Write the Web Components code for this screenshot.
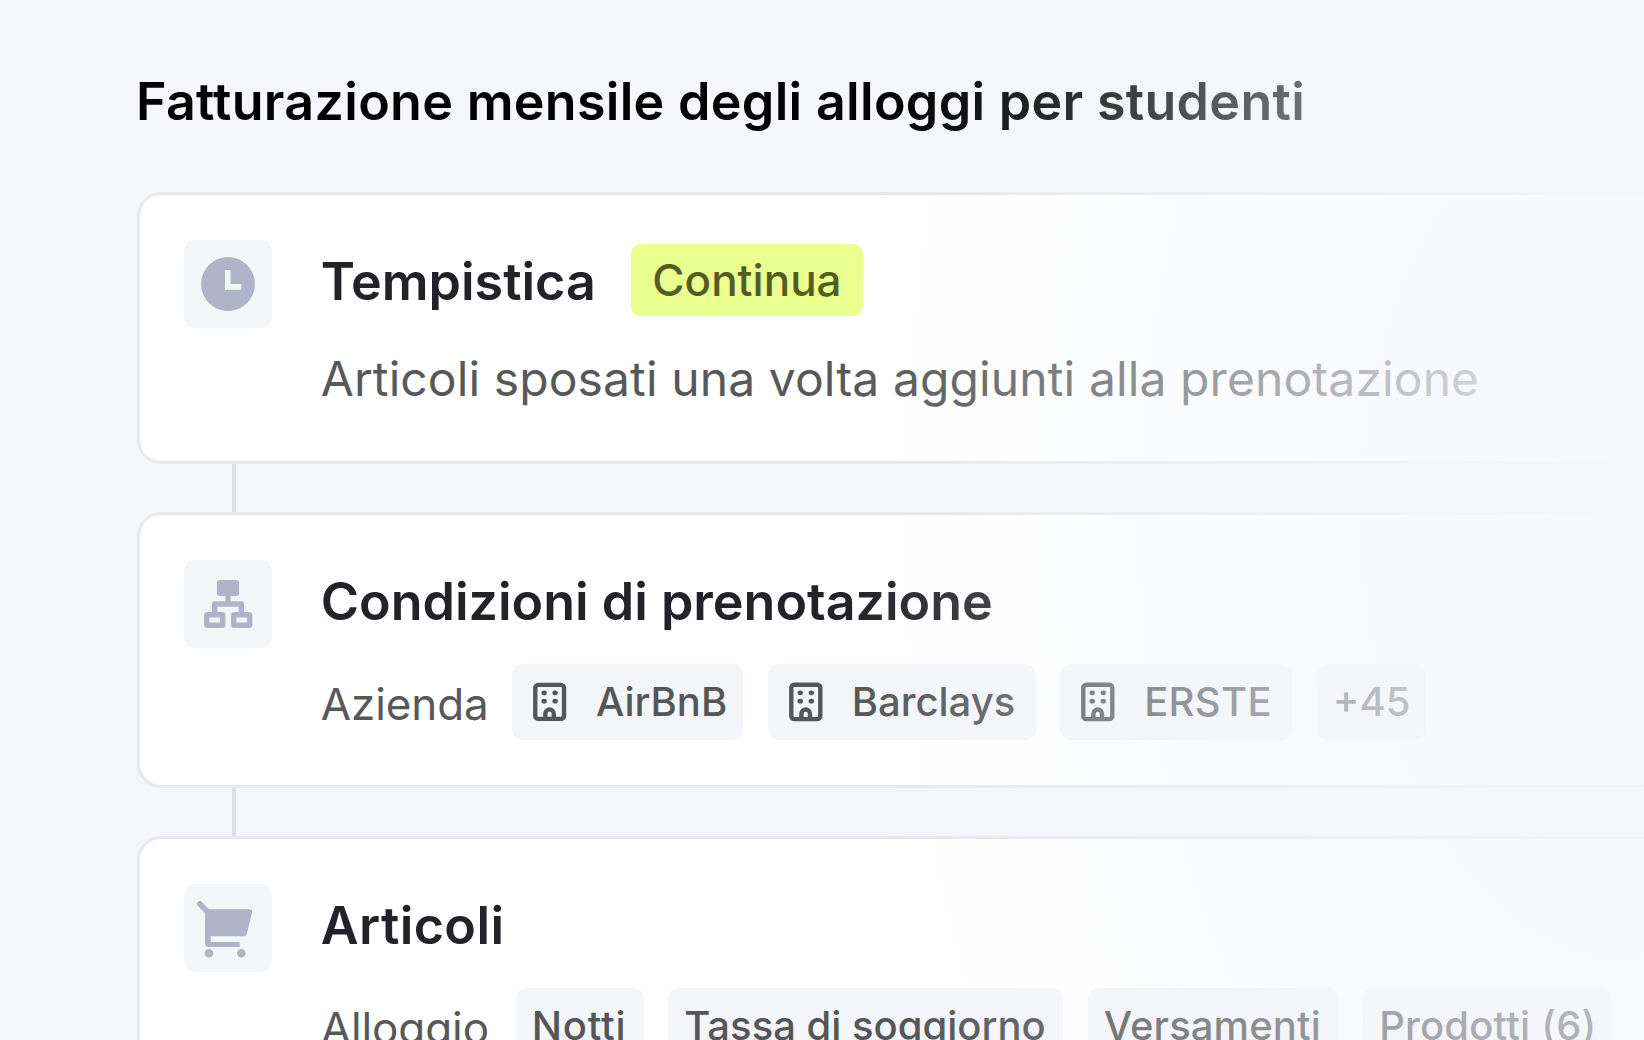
<!DOCTYPE html>
<html lang="it">
<head>
<meta charset="UTF-8">
<title>Fatturazione mensile</title>
<style>
	html, body {
		margin: 0;
		height: 100%;
		overflow: hidden;
		background: #f4f6fa;
	}
</style>
</head>
<body>
<billing-flow heading="Fatturazione mensile degli alloggi per studenti">
	<flow-card heading="Tempistica">
		<flow-icon slot="icon" name="clock"></flow-icon>
		<flow-chip slot="badge" class="lime">Continua</flow-chip>
		<flow-text>Articoli sposati una volta aggiunti alla prenotazione</flow-text>
	</flow-card>
	<flow-card heading="Condizioni di prenotazione" class="mid">
		<flow-icon slot="icon" name="tree"></flow-icon>
		<flow-row label="Azienda" label-width="191.5">
			<flow-chip icon="building" width="231">AirBnB</flow-chip>
			<flow-chip icon="building" width="268">Barclays</flow-chip>
			<flow-chip icon="building" width="232" spacing="0.3">ERSTE</flow-chip>
			<flow-chip width="108">+45</flow-chip>
		</flow-row>
	</flow-card>
	<flow-card heading="Articoli" class="last">
		<flow-icon slot="icon" name="cart"></flow-icon>
		<flow-row label="Alloggio" label-width="195">
			<flow-chip width="128" spacing="0.8">Notti</flow-chip>
			<flow-chip width="395">Tassa di soggiorno</flow-chip>
			<flow-chip width="251" spacing="0.1">Versamenti</flow-chip>
			<flow-chip width="248" spacing="0.2">Prodotti (6)</flow-chip>
		</flow-row>
	</flow-card>
</billing-flow>

<script>
const ICONS = {
	clock: `<svg width="88" height="88" viewBox="0 0 88 88">
		<circle cx="44" cy="44" r="27" fill="#b0b3c8"/>
		<path d="M43.8 30V46.9H57.3" fill="none" stroke="#f3f6f9" stroke-width="5.6"/>
	</svg>`,
	tree: `<svg width="88" height="88" viewBox="0 0 88 88" fill="none" stroke="#b0b3c8" stroke-width="5.4">
		<rect x="33" y="20" width="22" height="16" rx="2" fill="#b0b3c8" stroke="none"/>
		<path d="M44 34V44M30.7 54V44H57.3V54" stroke-linejoin="round"/>
		<rect x="22.7" y="54.7" width="16" height="10.6" rx="0.5"/>
		<rect x="49.7" y="54.7" width="16" height="10.6" rx="0.5"/>
	</svg>`,
	cart: `<svg width="88" height="88" viewBox="0 0 88 88" fill="#b0b3c8">
		<path d="M25 25.3H65.5Q68.7 25.3 68 28.5L62.8 50Q62.2 52.3 60 52.3H26.7V58H55.7V63H24.5Q21 63 21 59.5V29L13.7 21.7Q12 19.7 13.7 18Q15.7 16.2 17.7 18Z"/>
		<circle cx="25" cy="69.3" r="4.3"/>
		<circle cx="57.3" cy="69.3" r="4.3"/>
	</svg>`,
	building: `<svg width="34" height="40" viewBox="0 0 34 40" fill="none" stroke="#555658" stroke-width="4.4">
		<rect x="2.3" y="2.7" width="29" height="34.4" rx="3"/>
		<path d="M12.4 37V31.8A4.3 4.3 0 0 1 21 31.8V37"/>
		<g fill="#555658" stroke="none">
			<ellipse cx="11.2" cy="10.8" rx="2.7" ry="2.4"/>
			<ellipse cx="22.3" cy="10.8" rx="2.7" ry="2.4"/>
			<ellipse cx="11.2" cy="19.2" rx="2.7" ry="2.4"/>
			<ellipse cx="22.3" cy="19.2" rx="2.7" ry="2.4"/>
		</g>
	</svg>`
};

class BillingFlow extends HTMLElement {
	constructor() {
		super();
		this.attachShadow({ mode: 'open' });
		this.shadowRoot.innerHTML = `
			<style>
				:host {
					display: block;
					box-sizing: border-box;
					position: relative;
					width: 1644px;
					height: 1040px;
					padding: 70px 0 0 137px;
					overflow: hidden;
					font-family: Inter, sans-serif;
				}
				h1 {
					margin: 0 0 58px -1px;
					font-size: 52px;
					line-height: 64px;
					font-weight: 600;
					letter-spacing: 0.3px;
					white-space: nowrap;
					color: #000;
				}
				.fade {
					position: absolute;
					inset: 0;
					pointer-events: none;
					background: radial-gradient(ellipse 770px 1220px at 1640px 520px,
						#f4f6fa 0%, #f4f6fa 4%, rgba(244,246,250,0.8) 21%,
						rgba(244,246,250,0.1) 90%, rgba(244,246,250,0) 104%);
				}
			</style>
			<h1></h1>
			<slot></slot>
			<div class="fade"></div>
			`;
	}

	connectedCallback() {
		this.shadowRoot.querySelector('h1').textContent = this.getAttribute('heading');
	}
}

class FlowCard extends HTMLElement {
	constructor() {
		super();
		this.attachShadow({ mode: 'open' });
		this.shadowRoot.innerHTML = `
			<style>
				:host {
					display: block;
					width: 1600px;
				}
				.card {
					box-sizing: border-box;
					display: flex;
					gap: 48.7px;
					height: 272px;
					padding: 45px 44px;
					border: 3px solid #e6e8ea;
					border-radius: 24px;
					background: #fff;
				}
				:host(.mid) .card {
					height: 276px;
				}
				.head {
					display: flex;
					align-items: center;
					gap: 35.5px;
					height: 80px;
				}
				h2 {
					margin: 0;
					padding-top: 3px;
					font-size: 52px;
					line-height: 80px;
					font-weight: 600;
					white-space: nowrap;
					color: #222228;
				}
				:host(.last) h2 {
					letter-spacing: 0.4px;
				}
				.line {
					width: 4px;
					height: 48px;
					margin-left: 95px;
					background: #dcdee2;
				}
				:host(.last) .line {
					display: none;
				}
			</style>
			<div class="card">
				<slot name="icon"></slot>
				<div>
					<div class="head"><h2></h2><slot name="badge"></slot></div>
					<slot></slot>
				</div>
			</div>
			<div class="line"></div>
			`;
	}

	connectedCallback() {
		this.shadowRoot.querySelector('h2').textContent = this.getAttribute('heading');
	}
}

class FlowIcon extends HTMLElement {
	constructor() {
		super();
		this.attachShadow({ mode: 'open' });
	}

	connectedCallback() {
		this.shadowRoot.innerHTML = `
			<style>
				:host {
					display: block;
					flex: none;
					width: 88px;
					height: 88px;
					border-radius: 10px;
					background: #f3f6f9;
				}
				svg {
					display: block;
				}
			</style>
			${ICONS[this.getAttribute('name')]}
			`;
	}
}

class FlowText extends HTMLElement {
	constructor() {
		super();
		this.attachShadow({ mode: 'open' });
		this.shadowRoot.innerHTML = `
			<style>
				:host {
					display: block;
					margin-top: 29px;
					font-size: 48px;
					line-height: 60px;
					letter-spacing: 0.1px;
					white-space: nowrap;
					color: #58585a;
				}
			</style>
			<slot></slot>
			`;
	}
}

class FlowRow extends HTMLElement {
	constructor() {
		super();
		this.attachShadow({ mode: 'open' });
		this.shadowRoot.innerHTML = `
			<style>
				:host {
					display: flex;
					gap: 24.5px;
					margin-top: 24px;
					height: 76px;
				}
				.label {
					flex: none;
					margin-right: -24.5px;
					font-size: 44px;
					line-height: 80px;
					letter-spacing: -0.1px;
					color: #58585a;
				}
			</style>
			<span class="label"></span>
			<slot></slot>
			`;
	}

	connectedCallback() {
		const label = this.shadowRoot.querySelector('.label');
		label.textContent = this.getAttribute('label');
		label.style.width = this.getAttribute('label-width') + 'px';
	}
}

class FlowChip extends HTMLElement {
	constructor() {
		super();
		this.attachShadow({ mode: 'open' });
	}

	connectedCallback() {
		this.shadowRoot.innerHTML = `
			<style>
				:host {
					display: flex;
					align-items: center;
					flex: none;
					gap: 29px;
					box-sizing: border-box;
					height: 76px;
					padding: 0 16px;
					border-radius: 10px;
					background: #f3f5f9;
					font-size: 40px;
					font-weight: 500;
					line-height: 76px;
					white-space: nowrap;
					color: #555658;
				}
				:host(.lime) {
					height: 72px;
					padding: 0 21px;
					background: #ebff8f;
					font-size: 44px;
					color: #545c24;
				}
				svg {
					display: block;
					margin-left: 5px;
				}
			</style>
			${ICONS[this.getAttribute('icon')] || ''}
			<slot></slot>
			`;
		if (this.hasAttribute('width')) {
			this.style.width = this.getAttribute('width') + 'px';
		}
		if (this.hasAttribute('spacing')) {
			this.style.letterSpacing = this.getAttribute('spacing') + 'px';
		}
	}
}

customElements.define('billing-flow', BillingFlow);
customElements.define('flow-card', FlowCard);
customElements.define('flow-icon', FlowIcon);
customElements.define('flow-text', FlowText);
customElements.define('flow-row', FlowRow);
customElements.define('flow-chip', FlowChip);
</script>
</body>
</html>
